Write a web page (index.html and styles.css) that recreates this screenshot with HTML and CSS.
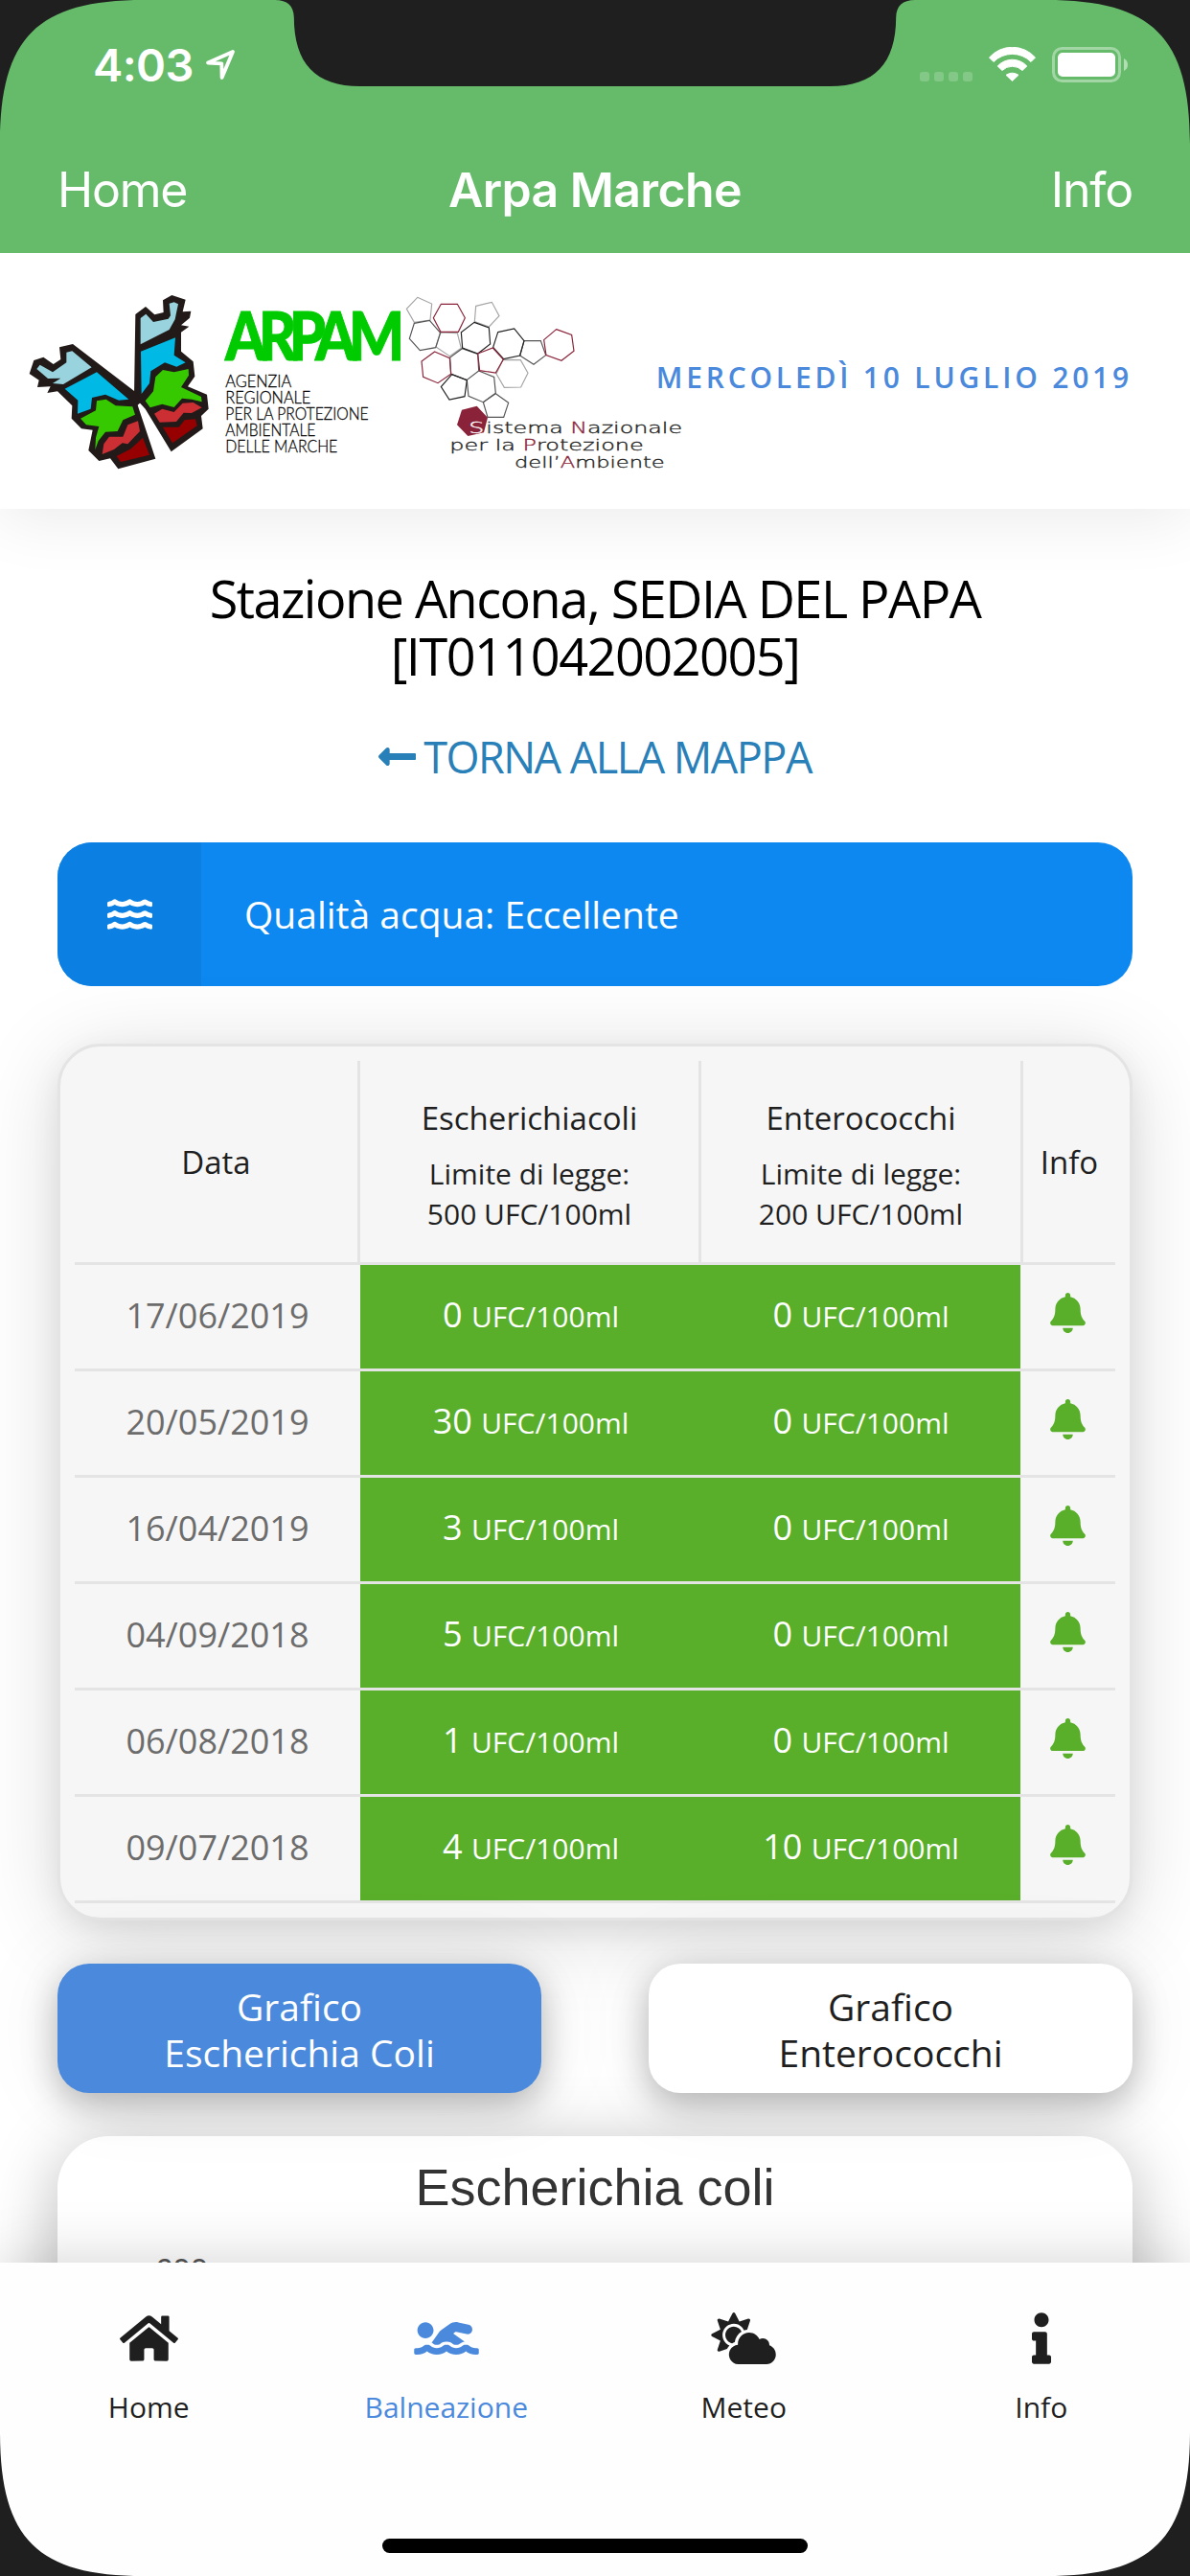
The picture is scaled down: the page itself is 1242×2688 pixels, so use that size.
FILE: index.html
```html
<!DOCTYPE html>
<html lang="it">
<head>
<meta charset="utf-8">
<title>Arpa Marche</title>
<link rel="stylesheet" href="styles.css">
</head>
<body>
<svg class="defs" width="0" height="0" aria-hidden="true">
  <symbol id="bell" viewBox="0 0 448 512"><path d="M439.39 362.29c-19.32-20.76-55.47-51.99-55.47-154.29 0-77.7-54.48-139.9-127.94-155.16V32c0-17.67-14.32-32-31.98-32s-31.98 14.33-31.98 32v20.84C118.56 68.1 64.08 130.3 64.08 208c0 102.3-36.15 133.53-55.47 154.29-6 6.45-8.66 14.16-8.61 21.71.11 16.4 12.98 32 32.1 32h383.8c19.12 0 32-15.6 32.1-32 .05-7.55-2.61-15.27-8.61-21.71zM224 512c35.32 0 63.97-28.65 63.97-64H160.03c0 35.35 28.65 64 63.97 64z"/></symbol>
  <path id="wave" d="M562.1 383.9c-21.5-2.4-42.1-10.5-57.9-22.9-14.1-11.1-34.2-11.3-48.2 0-37.9 30.4-107.2 30.4-145.7-1.5-13.5-11.2-33-9.1-46.7 1.8-38 30.1-106.9 30-145.2-1.7-13.5-11.2-33.3-8.9-47.1 2-15.5 12.2-36 20.1-57.7 22.4-7.9.8-13.6 7.8-13.6 15.7v32.2c0 9.1 7.6 16.8 16.7 16 28.8-2.5 56.1-11.4 79.4-25.9 56.5 34.6 137 34.1 192 0 56.5 34.6 137 34.1 192 0 23.3 14.2 50.9 23.3 79.1 25.8 9.1.8 16.7-6.9 16.7-16v-31.6c.1-8-5.7-15.4-13.8-16.3z"/>
</svg>
<div class="screen">
  <div class="topbar">
    <div class="status">
      <div class="clock"><span>4:03</span>
        <svg width="34" height="34" viewBox="0 0 34 34"><path d="M30 4L4 15.5l14.3.8L18.6 31z" fill="none" stroke="#fff" stroke-width="3.8" stroke-linejoin="round"/></svg>
      </div>
      <svg class="indicators" width="220" height="38" viewBox="960 49 220 38">
        <g fill="#fff" fill-opacity=".2"><rect x="960" y="75" width="10" height="10" rx="3"/><rect x="975" y="75" width="10" height="10" rx="3"/><rect x="990" y="75" width="10" height="10" rx="3"/><rect x="1005" y="75" width="10" height="10" rx="3"/></g>
        <g fill="#fff" stroke="#fff" stroke-width="1" stroke-linejoin="round"><path d="M1032.5 60A32.2 32.2 0 0 1 1080.500 60L1076 64.500A27.5 27.5 0 0 0 1037 64.500Z"/><path d="M1041.200 69A20.7 20.7 0 0 1 1071.800 69L1067 73.500A15 15 0 0 0 1046 73.500Z"/><path d="M1050 78.300A12 12 0 0 1 1063 78.300L1056.500 84.500Z"/></g>
        <rect x="1099.500" y="50.500" width="69" height="34" rx="9" fill="none" stroke="#fff" stroke-opacity=".4" stroke-width="3"/>
        <rect x="1104" y="55" width="60" height="25" rx="5" fill="#fff"/>
        <path d="M1173 61q4 2 4 6.500t-4 6.500z" fill="#fff" fill-opacity=".5"/>
      </svg>
    </div>
    <nav class="nav"><span>Home</span><b>Arpa Marche</b><span>Info</span></nav>
  </div>

  <header class="header">
    <svg class="logos" width="690" height="190" viewBox="90 99 2070 570">
      <g fill="#211a18">
        <path d="M424 174L456 150 484 175 512 168 510 130 538 114 581 128 572 166 598 164 594 185 567 208 592 212 567 230 567 290 605 322 610 368 588 400 648 425 653 470 630 492 635 532 536 604 455 470 433 446 420 430Z"/>
        <path d="M186 277L228 267 425 418 440 450 431 458 487 626 370 658 345 625 310 633 277 600 290 536 255 532 224 500 226 460 180 415 148 420 158 400 117 402 122 380 92 360 106 318 136 308 167 330 190 315Z"/>
      </g>
      <g fill="#98d3de"><path d="M440 186L457 173 480 198 527 188 534 178 530 140 545 136 558 142 553 165 548 190 530 222 440 268Z"/><path d="M208 293L226 289 287 340 198 393 165 390 190 374 150 375 115 345 125 332 165 355 208 325Z"/></g>
      <g fill="#00b9e4"><path d="M441 290L549 247 545 302 581 325 553 338 516 325 472 352 468 390 443 423Z"/><path d="M203 407L303 355 403 440 372 443 330 425 288 435 284 470 243 485 244 443Z"/></g>
      <g fill="#36c900"><path d="M487 370L510 348 545 355 590 345 591 365 567 402 630 432 632 448 600 440 570 437 545 465 508 455 470 466 455 445 480 415Z"/><path d="M252 500L300 475 303 445 332 440 362 460 415 463 423 488 385 505 368 540 330 542 308 570 298 598 300 560 310 525 270 520Z"/></g>
      <g fill="#cb2f33"><path d="M483 485L508 470 545 480 572 452 605 450 632 466 600 483 575 482 552 510 500 512Z"/><path d="M320 612L325 580 342 557 385 557 400 520 432 508 438 540 400 580 383 577 357 597Z"/></g>
      <g fill="#960000"><path d="M510 527L560 527 578 505 612 502 617 523 540 577Z"/><path d="M365 618L410 595 447 560 468 614 378 636Z"/></g>
      <text class="brand" x="705" y="318" textLength="538" lengthAdjust="spacingAndGlyphs">ARPAM</text>
      <g class="agency">
        <text x="706" y="401" textLength="207" lengthAdjust="spacingAndGlyphs">AGENZIA</text>
        <text x="706" y="452" textLength="267" lengthAdjust="spacingAndGlyphs">REGIONALE</text>
        <text x="706" y="503" textLength="448" lengthAdjust="spacingAndGlyphs">PER LA PROTEZIONE</text>
        <text x="706" y="554" textLength="282" lengthAdjust="spacingAndGlyphs">AMBIENTALE</text>
        <text x="706" y="605" textLength="351" lengthAdjust="spacingAndGlyphs">DELLE MARCHE</text>
      </g>
      <g transform="translate(1200 0)">
        <g fill="none" stroke-width="3.500">
          <g stroke="#a5a5a5"><path d="M107 121L152 141 147 192 97 199 73 157Z"/><path d="M290 148L340 136 363 179 331 213 286 197Z"/><path d="M178 231L232 233 244 280 208 305 165 276Z"/><path d="M375 316L430 317 453 358 431 402 379 403 354 360Z"/></g>
          <g stroke="#555"><path d="M97 202L145 193 179 232 164 278 115 287 82 250Z"/><path d="M247 281L296 298 299 351 261 380 212 361 209 309Z"/><path d="M299 351L347 370 352 421 313 449 267 430 262 380"/><path d="M441 257L493 257 509 302 471 331 428 303Z"/><path d="M352 422L392 451 377 496 327 496 313 449Z"/></g>
          <g stroke="#222"><path d="M285 199L331 216 335 267 296 297 248 279 244 230Z"/><path d="M359 230L410 219 441 257 428 303 377 314 344 277Z"/><path d="M215 362L262 380 255 431 207 441 181 401Z"/></g>
          <g stroke="#8a2339"><path d="M181 142L232 142 256 185 235 229 180 229 157 185Z"/><path d="M161 291L208 311 212 361 171 389 125 370 120 321Z"/><path d="M296 297L343 279 376 315 352 357 302 350Z"/><path d="M542 221L590 238 597 289 558 319 510 302 503 254Z"/></g>
        </g>
        <path fill="#8a2339" d="M246 473L293 461 327 497 315 544 265 555 231 520Z"/>
        <g class="snpa">
          <text x="268" y="547" textLength="48" lengthAdjust="spacingAndGlyphs" fill="#fff" stroke="#fff">S</text>
          <text x="322" y="547" textLength="614" lengthAdjust="spacingAndGlyphs">istema <tspan class="initial">N</tspan>azionale</text>
          <text x="208" y="600" textLength="607" lengthAdjust="spacingAndGlyphs">per la <tspan class="initial">P</tspan>rotezione</text>
          <text x="411" y="654" textLength="470" lengthAdjust="spacingAndGlyphs">dell’<tspan class="initial">A</tspan>mbiente</text>
        </g>
      </g>
    </svg>
    <div class="date">MERCOLEDÌ 10 LUGLIO 2019</div>
  </header>

  <main class="main">
    <h1 class="title">Stazione Ancona, SEDIA DEL PAPA<br>[IT011042002005]</h1>
    <a class="back"><svg width="39" height="45" viewBox="0 0 448 512"><path fill="currentColor" d="M134.059 296H436c6.627 0 12-5.373 12-12v-56c0-6.627-5.373-12-12-12H134.059v-46.059c0-21.382-25.851-32.09-40.971-16.971L7.029 239.029c-9.373 9.373-9.373 24.569 0 33.941l86.059 86.059c15.119 15.119 40.971 4.411 40.971-16.971V296z"/></svg><span>TORNA ALLA MAPPA</span></a>

    <div class="quality">
      <div class="quality-icon"><svg width="47" height="42" viewBox="0 0 576 512" fill="#fff"><use href="#wave"/><use href="#wave" y="-144"/><use href="#wave" y="-288"/></svg></div>
      <div class="quality-text">Qualità acqua: Eccellente</div>
    </div>

    <div class="card">
      <table class="samples">
        <colgroup><col class="c-date"><col class="c-esch"><col class="c-ent"><col class="c-info"></colgroup>
        <thead><tr>
          <th>Data</th>
          <th class="value">Escherichiacoli<small>Limite di legge:<br>500 UFC/100ml</small></th>
          <th class="value last-value">Enterococchi<small>Limite di legge:<br>200 UFC/100ml</small></th>
          <th class="info">Info</th>
        </tr></thead>
        <tbody>
          <tr><td class="day">17/06/2019</td><td class="ok">0 <small>UFC/100ml</small></td><td class="ok">0 <small>UFC/100ml</small></td><td><svg class="bell"><use href="#bell"/></svg></td></tr>
          <tr><td class="day">20/05/2019</td><td class="ok">30 <small>UFC/100ml</small></td><td class="ok">0 <small>UFC/100ml</small></td><td><svg class="bell"><use href="#bell"/></svg></td></tr>
          <tr><td class="day">16/04/2019</td><td class="ok">3 <small>UFC/100ml</small></td><td class="ok">0 <small>UFC/100ml</small></td><td><svg class="bell"><use href="#bell"/></svg></td></tr>
          <tr><td class="day">04/09/2018</td><td class="ok">5 <small>UFC/100ml</small></td><td class="ok">0 <small>UFC/100ml</small></td><td><svg class="bell"><use href="#bell"/></svg></td></tr>
          <tr><td class="day">06/08/2018</td><td class="ok">1 <small>UFC/100ml</small></td><td class="ok">0 <small>UFC/100ml</small></td><td><svg class="bell"><use href="#bell"/></svg></td></tr>
          <tr><td class="day">09/07/2018</td><td class="ok">4 <small>UFC/100ml</small></td><td class="ok">10 <small>UFC/100ml</small></td><td><svg class="bell"><use href="#bell"/></svg></td></tr>
        </tbody>
      </table>
    </div>

    <div class="buttons">
      <div class="btn active">Grafico<br>Escherichia Coli</div>
      <div class="btn">Grafico<br>Enterococchi</div>
    </div>

    <div class="chart">
      <h2>Escherichia coli</h2>
      <div class="axis">600</div>
    </div>
  </main>

  <footer class="tabs">
    <div class="tab"><svg width="61" height="54" viewBox="0 0 576 512"><path d="M280.37 148.26L96 300.11V464a16 16 0 0 0 16 16l112.06-.29a16 16 0 0 0 15.92-16V368a16 16 0 0 1 16-16h64a16 16 0 0 1 16 16v95.64a16 16 0 0 0 16 16.05L464 480a16 16 0 0 0 16-16V300L295.67 148.26a12.19 12.19 0 0 0-15.3 0zM571.6 251.47L488 182.56V44.05a12 12 0 0 0-12-12h-56a12 12 0 0 0-12 12v72.61L318.47 43a48 48 0 0 0-61 0L4.34 251.47a12 12 0 0 0-1.6 16.9l25.5 31A12 12 0 0 0 45.15 301l235.22-193.74a12.19 12.19 0 0 1 15.3 0L530.9 301a12 12 0 0 0 16.9-1.6l25.5-31a12 12 0 0 0-1.7-16.93z"/></svg><span>Home</span></div>
    <div class="tab current"><svg width="68" height="54" viewBox="0 0 640 512"><path d="M189.61 310.58c3.54 3.26 15.27 9.42 34.39 9.42s30.86-6.16 34.39-9.42c16.02-14.77 34.5-22.58 53.46-22.58h16.3c18.96 0 37.45 7.81 53.46 22.58 3.54 3.26 15.27 9.42 34.39 9.42s30.86-6.16 34.39-9.42c14.86-13.71 31.88-21.12 49.39-22.16l-112.84-80.6 18-12.86c3.64-2.58 8.28-3.52 12.62-2.61l100.35 21.53c25.91 5.53 51.44-10.97 57-36.88 5.55-25.92-10.95-51.44-36.88-57L437.68 98.47c-30.73-6.58-63.02.12-88.56 18.38l-80.02 57.17c-10.38 7.39-19.36 16.44-26.72 26.94L173.75 299c5.47 3.23 10.82 6.93 15.86 11.58zM624 352h-16c-26.04 0-45.8-8.42-56.09-17.9-8.9-8.21-19.66-14.1-31.77-14.1h-16.3c-12.11 0-22.87 5.89-31.77 14.1C461.8 343.58 442.04 352 416 352s-45.8-8.42-56.09-17.9c-8.9-8.21-19.66-14.1-31.77-14.1h-16.3c-12.11 0-22.87 5.89-31.77 14.1C269.8 343.58 250.04 352 224 352s-45.8-8.42-56.09-17.9c-8.9-8.21-19.66-14.1-31.77-14.1h-16.3c-12.11 0-22.87 5.89-31.77 14.1C77.8 343.58 58.04 352 32 352H16c-8.84 0-16 7.16-16 16v32c0 8.84 7.16 16 16 16h16c38.62 0 72.72-12.19 96-31.84 23.28 19.66 57.38 31.84 96 31.84s72.72-12.19 96-31.84c23.28 19.66 57.38 31.84 96 31.84s72.72-12.19 96-31.84c23.28 19.66 57.38 31.84 96 31.84h16c8.84 0 16-7.16 16-16v-32c0-8.84-7.16-16-16-16zm-512-96c44.18 0 80-35.82 80-80s-35.82-80-80-80-80 35.82-80 80 35.82 80 80 80z"/></svg><span>Balneazione</span></div>
    <div class="tab"><svg width="68" height="54" viewBox="0 0 640 512"><path d="M575.2 325.7c.2-1.900.8-3.700.8-5.600 0-35.300-28.700-64-64-64-12.600 0-24.200 3.800-34.100 10-17.600-38.800-56.500-66-101.900-66-61.800 0-112 50.100-112 112 0 3 .7 5.800.9 8.700-49.600 3.700-88.900 44.700-88.900 95.300 0 53 43 96 96 96h272c53 0 96-43 96-96 0-42.100-27.200-77.400-64.800-90.400zm-430.4-22.600c-43.700-43.700-43.700-114.700 0-158.300 43.700-43.700 114.700-43.700 158.400 0 9.700 9.700 16.900 20.900 22.300 32.700 9.800-3.700 20.100-6 30.700-7.500L386 81.100c4-11.900-7.300-23.100-19.200-19.200L279 91.200 237.500 8.400C232-2.800 216-2.800 210.400 8.400L169 91.200 81.100 61.900C69.300 58 58 69.300 61.900 81.100l29.300 87.800-82.800 41.500c-11.200 5.600-11.200 21.500 0 27.100l82.800 41.400-29.300 87.800c-4 11.900 7.300 23.100 19.200 19.200l76.100-25.300c6.100-12.400 14-23.700 23.600-33.500-13.100-5.400-25.400-13.400-36-24zm-4.800-79.200c0 40.800 29.300 74.800 67.900 82.300 8-4.700 16.300-8.800 25.200-11.700 5.400-44.300 31-82.500 67.400-105C287.300 160.400 258 140 224 140c-46.300 0-84 37.600-84 83.900z"/></svg><span>Meteo</span></div>
    <div class="tab"><svg width="20" height="54" viewBox="0 0 192 512"><path d="M20 424.229h20V279.771H20c-11.046 0-20-8.954-20-20V212c0-11.046 8.954-20 20-20h112c11.046 0 20 8.954 20 20v212.229h20c11.046 0 20 8.954 20 20V492c0 11.046-8.954 20-20 20H20c-11.046 0-20-8.954-20-20v-47.771c0-11.046 8.954-20 20-20zM96 0C56.235 0 24 32.235 24 72s32.235 72 72 72 72-32.235 72-72S135.764 0 96 0z"/></svg><span>Info</span></div>
  </footer>

  <svg class="bezel" width="1242" height="2688" viewBox="0 0 1242 2688">
    <g fill="#1f1f1f">
      <path d="M0 0H150C39 0 0 39 0 150Z"/>
      <path d="M1242 0H1092C1203 0 1242 39 1242 150Z"/>
      <path d="M0 2688H150C39 2688 0 2649 0 2538Z"/>
      <path d="M1242 2688H1092C1203 2688 1242 2649 1242 2538Z"/>
      <path d="M287 0C300 0 306.500 6 306.800 18C307 66 329 90 376 90H866C913 90 935 66 935.200 18C935.500 6 942 0 955 0Z"/>
    </g>
    <rect x="399" y="2649" width="444" height="15" rx="7.500"/>
  </svg>
</div>
</body>
</html>
```
FILE: styles.css
```css
* { box-sizing: border-box; }
body { margin: 0; font-family: "Open Sans", sans-serif; color: #1f1f1f; background: #fff; }
.defs { position: absolute; }
svg { display: block; flex: none; }
.screen { position: relative; width: 1242px; height: 2688px; overflow: hidden; display: flex; flex-direction: column; }

.topbar { flex: none; height: 264px; background: #66bb6a; color: #fff; font-family: Inter, sans-serif; position: relative; z-index: 3; }
.status { height: 132px; padding: 49px 62px 0 97px; display: flex; justify-content: space-between; align-items: flex-start; }
.clock { display: flex; gap: 11px; font-size: 47px; font-weight: 600; line-height: 38px; letter-spacing: -0.6px; }
.clock svg { margin-top: 1px; }
.nav { height: 132px; padding: 0 60px; display: grid; grid-template-columns: 1fr auto 1fr; align-items: center; font-size: 50px; line-height: 60px; letter-spacing: -1.2px; }
.nav b { font-weight: 600; letter-spacing: -0.6px; }
.nav span:last-child { text-align: right; }

.header { flex: none; height: 267px; padding: 39px 60px 0 30px; display: flex; justify-content: space-between; background: #fff; position: relative; z-index: 2; box-shadow: 0 12px 60px rgba(0,0,0,.08); }
.logos { margin-right: -80px; }
.brand { font-family: Lato, sans-serif; font-weight: 900; font-size: 209px; letter-spacing: -27px; fill: #00cb00; stroke: #00cb00; stroke-width: 3; }
.agency { font-family: Lato, sans-serif; font-weight: 300; font-size: 51px; fill: #000; stroke: #000; stroke-width: .8; }
.snpa { font-family: "DejaVu Sans", sans-serif; font-weight: 200; font-size: 48px; fill: #222; stroke: #222; stroke-width: 1; }
.initial { fill: #8a2339; stroke: #8a2339; }
.date { margin-top: 68px; font-size: 30px; line-height: 45px; font-weight: 600; letter-spacing: 3.8px; color: #4a89dc; white-space: nowrap; }

.main { flex: none; height: 1830px; padding: 63px 60px 0; overflow: hidden; }
.title { margin: 0; font-size: 54px; line-height: 60px; font-weight: 400; letter-spacing: -1.5px; text-align: center; color: #000; }
.back { display: flex; justify-content: center; align-items: center; gap: 8px; margin-top: 45px; height: 60px; font-size: 45px; letter-spacing: -1.5px; color: #2980b9; }
.quality { margin-top: 60px; height: 150px; border-radius: 36px; overflow: hidden; display: flex; background: #0e88f1; color: #fff; font-size: 39px; }
.quality-icon { width: 150px; display: flex; align-items: center; justify-content: center; background: #0c80e2; }
.quality-text { padding-left: 45px; line-height: 150px; }

.card { margin-top: 60px; padding: 15px; border: 3px solid #e4e4e4; border-radius: 45px; background: #f6f6f6; box-shadow: 0 12px 90px rgba(0,0,0,.14), 0 9px 30px rgba(0,0,0,.07); }
.samples { width: 1086px; table-layout: fixed; border-spacing: 0; text-align: center; }
.c-date { width: 298px; }
.c-esch { width: 356px; }
.c-ent { width: 333px; }
.c-info { width: 99px; }
.samples th { height: 213px; padding: 0; font-size: 33px; line-height: 45px; font-weight: 400; border-right: 3px solid #e4e4e4; border-bottom: 3px solid #e4e4e4; }
.samples th small { display: block; margin-top: 15px; font-size: 30px; line-height: 42px; }
.samples th.value { padding-top: 7px; }
.samples th.last-value { border-right: 0; }
.samples th.info { border-right: 0; border-left: 3px solid #e4e4e4; }
.samples td { height: 111px; padding: 0; font-size: 36px; line-height: 48px; color: #6c6c6c; border-bottom: 3px solid #e4e4e4; }
.samples td.day, .samples td.ok { padding-bottom: 2px; }
.samples td small { font-size: 30px; }
.samples td.ok { background: #59af2a; color: #fff; }
.bell { width: 37px; height: 42px; margin: -8px auto 0; fill: #59af2a; }

.buttons { margin-top: 45px; display: flex; justify-content: space-between; }
.btn { width: 505px; height: 135px; padding-top: 21px; border-radius: 33px; background: #fff; text-align: center; font-size: 39px; line-height: 48px; font-variant-ligatures: none; box-shadow: 0 12px 36px rgba(0,0,0,.27), 0 0 90px rgba(0,0,0,.08); }
.btn.active { background: #4a89dc; color: #fff; }

.chart { margin-top: 45px; height: 600px; padding-top: 23px; border-radius: 54px; background: #fff; box-shadow: 0 12px 70px rgba(0,0,0,.28); font-family: "Liberation Sans", Arial, sans-serif; }
.chart h2 { margin: 0; font-size: 54px; line-height: 60px; font-weight: 400; text-align: center; color: #333; }
.axis { margin: 37px 0 0 102px; font-size: 33px; line-height: 40px; color: #555; }

.tabs { flex: none; height: 327px; padding-top: 52px; display: grid; grid-template-columns: repeat(4, 1fr); background: #fefefe; position: relative; z-index: 2; box-shadow: 0 0 60px rgba(0,0,0,.18); }
.tab { display: flex; flex-direction: column; align-items: center; gap: 22px; font-size: 30px; line-height: 45px; fill: currentColor; }
.tab.current { color: #4a89dc; }
.bezel { position: absolute; left: 0; top: 0; z-index: 5; }
```
